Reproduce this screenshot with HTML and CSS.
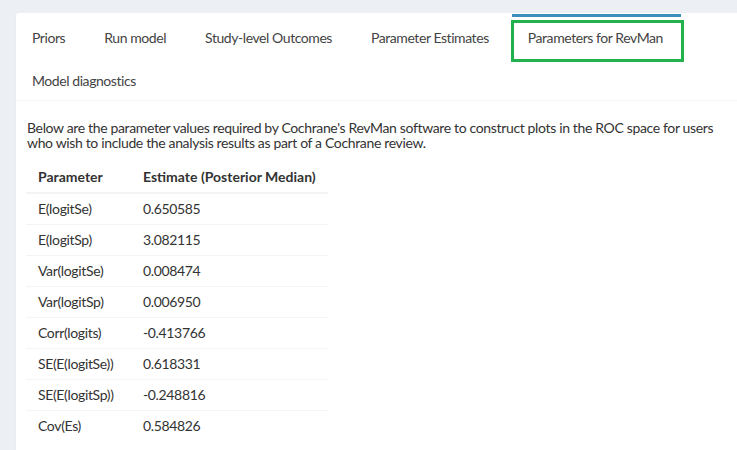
FILE: index.html
```html
<!DOCTYPE html>
<html lang="en">
<head>
<meta charset="utf-8">
<title>Parameters for RevMan</title>
<link rel="stylesheet" href="styles.css">
</head>
<body>
<div class="wrap">
  <div class="tabbox">
    <ul class="tabs">
      <li><a href="#">Priors</a></li>
      <li><a href="#">Run model</a></li>
      <li><a href="#">Study-level Outcomes</a></li>
      <li><a href="#">Parameter Estimates</a></li>
      <li class="active"><a href="#">Parameters for RevMan</a></li>
      <li><a href="#">Model diagnostics</a></li>
    </ul>
    <div class="content">
      <p class="intro">Below are the parameter values required by Cochrane's RevMan software to construct plots in the ROC space for users who wish to include the analysis results as part of a Cochrane review.</p>
      <table class="params">
        <thead>
          <tr><th class="col-name">Parameter</th><th>Estimate (Posterior Median)</th></tr>
        </thead>
        <tbody>
          <tr><td>E(logitSe)</td><td>0.650585</td></tr>
          <tr><td>E(logitSp)</td><td>3.082115</td></tr>
          <tr><td>Var(logitSe)</td><td>0.008474</td></tr>
          <tr><td>Var(logitSp)</td><td>0.006950</td></tr>
          <tr><td>Corr(logits)</td><td>-0.413766</td></tr>
          <tr><td>SE(E(logitSe))</td><td>0.618331</td></tr>
          <tr><td>SE(E(logitSp))</td><td>-0.248816</td></tr>
          <tr><td>Cov(Es)</td><td>0.584826</td></tr>
        </tbody>
      </table>
    </div>
  </div>
</div>
</body>
</html>
```
FILE: styles.css
```css
html, body {
  margin: 0;
  padding: 0;
  height: 100%;
  overflow: hidden;
}
body {
  background: #ecf0f5;
  font-family: "Lato", "Open Sans", sans-serif;
  font-size: 14px;
  line-height: 20px;
  color: #333;
  letter-spacing: -0.35px;
}
.wrap {
  padding: 13px 0 0 16px;
  box-sizing: border-box;
  height: 100%;
}
.tabbox {
  background: #fff;
  border-radius: 3px 0 0 0;
  box-shadow: 0 1px 1px rgba(0, 0, 0, 0.1);
  height: 100%;
}
.tabs {
  display: flex;
  flex-wrap: wrap;
  list-style: none;
  margin: 0;
  padding: 1px 0 0 0;
  border-bottom: 1px solid #f4f4f4;
}
.tabs li {
  position: relative;
  border-top: 3px solid transparent;
  margin-right: 5px;
}
.tabs li a {
  display: block;
  padding: 11px 16px 9px 16px;
  margin-right: 2px;
  color: #444;
  text-decoration: none;
  letter-spacing: -0.43px;
}
.tabs li.active {
  border-top-color: #3c8dbc;
}
.tabs li.active::after {
  content: "";
  position: absolute;
  left: -1px;
  top: 3px;
  width: 173px;
  height: 42px;
  border: 3px solid #22b14c;
  box-sizing: border-box;
  pointer-events: none;
}
.tabs li:last-child {
  flex-basis: 100%;
}
.tabs li:last-child a {
  display: inline-block;
}
.content {
  padding: 10px 10px 0 10px;
}
.intro {
  margin: 9px 0 12px 1px;
  line-height: 15px;
}
.params {
  border-collapse: collapse;
}
.params th,
.params td {
  padding: 5px 12px;
  text-align: left;
  line-height: 20px;
}
.params .col-name {
  width: 81px;
}
.params th {
  font-weight: 700;
  letter-spacing: 0;
  border-bottom: 2px solid #f4f4f4;
}
.params td {
  border-top: 1px solid #f4f4f4;
}
.params tbody tr:first-child td {
  border-top: none;
}
```
